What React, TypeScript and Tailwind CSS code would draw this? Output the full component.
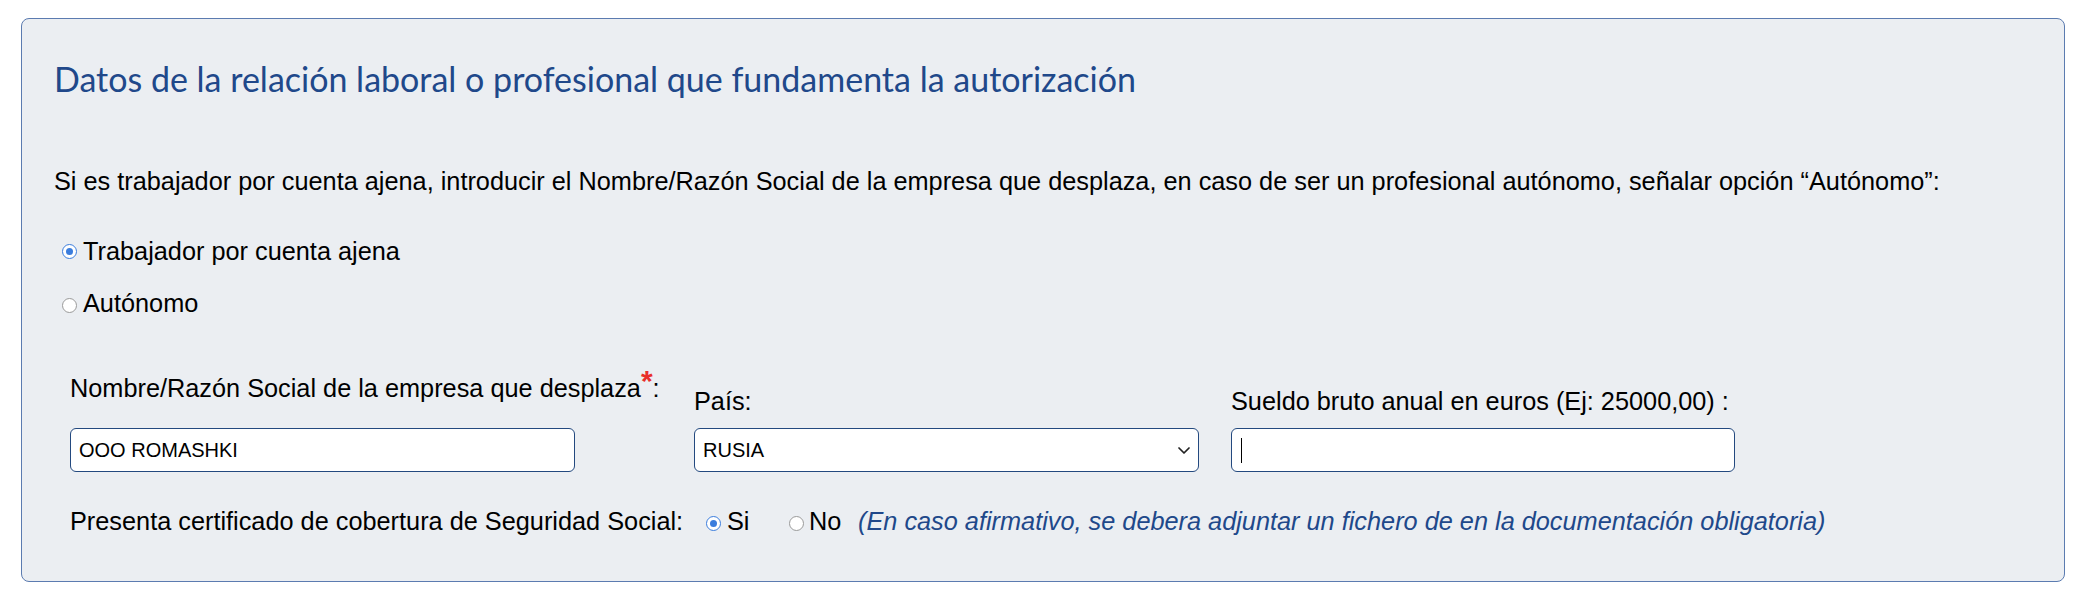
import React from "react";

const Radio = ({ checked }: { checked?: boolean }) => (
	<span
		className={`flex h-[15px] w-[15px] shrink-0 items-center justify-center rounded-full border bg-white ${
			checked ? "border-[#3b7ddd]" : "border-[#9a9a9a]"
		}`}
	>
		{checked && <span className="h-[7px] w-[7px] rounded-full bg-[#3b7ddd]"></span>}
	</span>
);

const Chevron = () => (
	<svg width="12" height="7" viewBox="0 0 12 7" fill="none" className="shrink-0">
		<path d="M1 1l5 5 5-5" stroke="#222" strokeWidth="1.7" strokeLinecap="round" strokeLinejoin="round" />
	</svg>
);

const App = () => {
	return (
		<div className="min-h-[598px] bg-white pt-[18px] font-['Liberation_Sans',Arial,sans-serif] text-black">
			<div className="ml-[21px] w-[2044px] rounded-[8px] border border-[#5b7bb0] bg-[#ebeef2] pl-[32px] pr-[20px] pt-[40px] pb-[45px]">
				<h2 className="font-['Lato',sans-serif] text-[34px] leading-[40px] text-[#20488a]">
					Datos de la relación laboral o profesional que fundamenta la autorización
				</h2>

				<p className="mt-[67px] text-[25.3px] leading-[30px]">
					Si es trabajador por cuenta ajena, introducir el Nombre/Razón Social de la empresa que desplaza, en caso de ser un profesional autónomo, señalar opción “Autónomo”:
				</p>

				<div className="mt-[40px] ml-[8px] flex items-center gap-[6px] text-[25.3px] leading-[30px]">
					<Radio checked />
					<span>Trabajador por cuenta ajena</span>
				</div>
				<div className="mt-[22px] ml-[8px] flex items-center gap-[6px] text-[25.3px] leading-[30px]">
					<span className="translate-y-[2px]">
						<Radio />
					</span>
					<span>Autónomo</span>
				</div>

				{/* datos empresa */}
				<div className="mt-[55px] ml-[16px] flex items-end gap-[32px] text-[25.3px] leading-[30px]">
					<div className="flex w-[592px] flex-col">
						<label className="mb-[25px] whitespace-nowrap">
							Nombre/Razón Social de la empresa que desplaza
							<span className="relative -top-[6px] font-bold text-[30px] leading-[0] text-[#e8302a]">*</span>:
						</label>
						<div className="flex h-[44px] w-[505px] items-center rounded-[6px] border border-[#23497f] bg-white pl-[8px] text-[20px]">
							OOO ROMASHKI
						</div>
					</div>
					<div className="flex w-[505px] flex-col">
						<label className="mb-[12px]">País:</label>
						<div className="flex h-[44px] w-[505px] items-center justify-between rounded-[6px] border border-[#23497f] bg-white pl-[8px] pr-[8px] text-[20px]">
							<span>RUSIA</span>
							<Chevron />
						</div>
					</div>
					<div className="flex w-[504px] flex-col">
						<label className="mb-[12px] whitespace-nowrap">Sueldo bruto anual en euros (Ej: 25000,00) :</label>
						<div className="flex h-[44px] w-[504px] items-center rounded-[6px] border border-[#23497f] bg-white pl-[9px]">
							<span className="h-[25px] w-[1px] bg-black"></span>
						</div>
					</div>
				</div>

				<div className="mt-[34px] ml-[16px] flex items-center text-[25.3px] leading-[30px]">
					<span className="w-[636px] whitespace-nowrap">Presenta certificado de cobertura de Seguridad Social:</span>
					<span className="translate-y-[2px]">
						<Radio checked />
					</span>
					<span className="ml-[6px] w-[62px]">Si</span>
					<span className="translate-y-[2px]">
						<Radio />
					</span>
					<span className="ml-[5px] w-[49px]">No</span>
					<span className="whitespace-nowrap italic text-[#20488a]">
						(En caso afirmativo, se debera adjuntar un fichero de en la documentación obligatoria)
					</span>
				</div>
			</div>
		</div>
	);
};

export default App;
